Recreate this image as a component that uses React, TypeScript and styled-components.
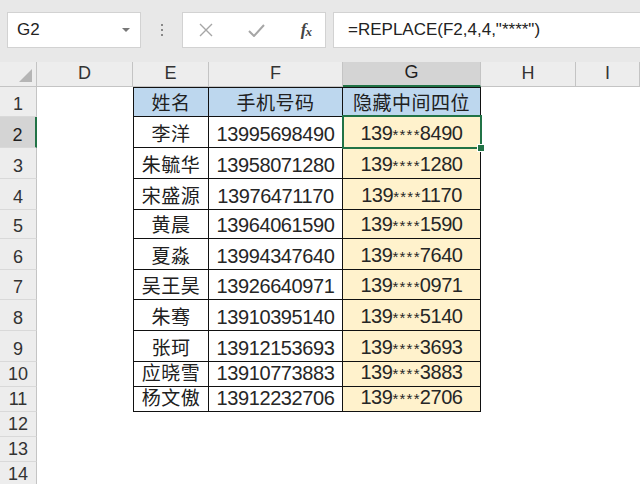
import React from 'react';
import styled, { createGlobalStyle } from 'styled-components';

const GlobalStyle = createGlobalStyle`
  html, body {
    margin: 0;
    padding: 0;
    background: #ffffff;
    overflow: hidden;
  }
  body {
    font-family: "Liberation Sans", "Noto Sans CJK SC", sans-serif;
    color: #222;
  }
`;

const Page = styled.div`
  width: 640px;
  height: 484px;
  overflow: hidden;
  display: flex;
  flex-direction: column;
`;

const TopBar = styled.div`
  height: 62px;
  flex: none;
  box-sizing: border-box;
  padding: 12px 0 0 7px;
  display: flex;
  align-items: flex-start;
  background: #e8e8e8;
`;

const WhiteBox = styled.div`
  height: 36px;
  box-sizing: border-box;
  background: #ffffff;
  border: 1px solid #d2d2d2;
  display: flex;
  align-items: center;
`;

const NameBox = styled(WhiteBox)`
  width: 134px;
  padding: 0 10px 0 9px;
  justify-content: space-between;
  font-size: 17px;
  color: #222;
`;

const DropArrow = styled.span`
  width: 0;
  height: 0;
  border-left: 4px solid transparent;
  border-right: 4px solid transparent;
  border-top: 4px solid #777;
`;

const Dots = styled.div`
  width: 41px;
  height: 36px;
  display: flex;
  flex-direction: column;
  align-items: center;
  justify-content: center;
  gap: 3px;
  span {
    width: 2px;
    height: 2px;
    background: #888;
  }
`;

const FxBox = styled(WhiteBox)`
  width: 144px;
  padding: 0 14px 0 16px;
  justify-content: space-between;
`;

const FxText = styled.span`
  font-family: "Liberation Serif", serif;
  font-style: italic;
  font-weight: bold;
  font-size: 17px;
  color: #444;
  letter-spacing: -1px;
  sub {
    font-size: 13px;
    vertical-align: -1px;
  }
`;

const FormulaBox = styled(WhiteBox)`
  flex: 1;
  margin-left: 7px;
  border-right: none;
  padding-left: 14px;
  font-size: 17px;
  color: #222;
`;

const rowHeights = [30, 31, 31, 31, 29, 31, 30, 31, 31, 25, 25, 25, 25, 25];

const Sheet = styled.div`
  display: grid;
  grid-template-columns: 37px 96px 76px 134px 138px 95px 1fr;
  grid-template-rows: 25px ${rowHeights.map((h) => `${h}px`).join(' ')};
`;

const Corner = styled.div`
  position: relative;
  background: #ededed;
  border-right: 1px solid #c4c4c4;
  border-bottom: 1px solid #c4c4c4;
  &::after {
    content: '';
    position: absolute;
    right: 4px;
    bottom: 4px;
    width: 0;
    height: 0;
    border-left: 13px solid transparent;
    border-bottom: 13px solid #b5b5b5;
  }
`;

const ColHeader = styled.div<{ $selected?: boolean }>`
  box-sizing: border-box;
  display: flex;
  align-items: flex-end;
  justify-content: center;
  padding-bottom: 2px;
  font-size: 18px;
  color: ${(p) => (p.$selected ? '#1f1f1f' : '#333')};
  background: ${(p) => (p.$selected ? '#d4d4d4' : '#ededed')};
  border-right: 1px solid #c4c4c4;
  border-bottom: ${(p) => (p.$selected ? '2px solid #217346' : '1px solid #c4c4c4')};
`;

const RowHeader = styled.div<{ $selected?: boolean }>`
  box-sizing: border-box;
  display: flex;
  align-items: flex-end;
  justify-content: center;
  padding-bottom: 2px;
  font-size: 18px;
  line-height: 20px;
  color: ${(p) => (p.$selected ? '#1f1f1f' : '#333')};
  background: ${(p) => (p.$selected ? '#d4d4d4' : '#ededed')};
  border-right: ${(p) => (p.$selected ? '2px solid #217346' : '1px solid #c4c4c4')};
  border-bottom: 1px solid #d9d9d9;
`;

const Cell = styled.div<{ $bg?: string; $table?: boolean; $top?: boolean; $left?: boolean }>`
  position: relative;
  box-sizing: border-box;
  display: flex;
  align-items: flex-end;
  justify-content: center;
  padding-bottom: 1px;
  font-size: 20px;
  line-height: 23px;
  letter-spacing: -0.4px;
  white-space: nowrap;
  color: #262626;
  background: ${(p) => p.$bg || '#ffffff'};
  border-right: ${(p) => (p.$table ? '1px solid #111' : 'none')};
  border-bottom: ${(p) => (p.$table ? '1px solid #111' : 'none')};
  border-left: ${(p) => (p.$left ? '1px solid #111' : 'none')};
  border-top: ${(p) => (p.$top ? '1px solid #111' : 'none')};
`;

const CjkText = styled.span`
  font-size: 19px;
  letter-spacing: 0.5px;
  color: #202020;
`;

const Stars = styled.span`
  font-size: 15px;
  letter-spacing: 1.2px;
  margin-right: -1px;
`;

const Selection = styled.div`
  position: absolute;
  z-index: 2;
  left: -1px;
  top: -2px;
  right: -2px;
  bottom: -2px;
  border: 2px solid #217346;
  pointer-events: none;
  &::after {
    content: '';
    position: absolute;
    right: -5px;
    bottom: -5px;
    width: 6px;
    height: 6px;
    background: #217346;
    border: 1px solid #ffffff;
  }
`;

const people: [string, string][] = [
  ['李洋', '13995698490'],
  ['朱毓华', '13958071280'],
  ['宋盛源', '13976471170'],
  ['黄晨', '13964061590'],
  ['夏淼', '13994347640'],
  ['吴王昊', '13926640971'],
  ['朱骞', '13910395140'],
  ['张珂', '13912153693'],
  ['应晓雪', '13910773883'],
  ['杨文傲', '13912232706'],
];

const columns = ['D', 'E', 'F', 'G', 'H', 'I'];

const Masked = ({ phone }: { phone: string }) => (
  <span>
    {phone.slice(0, 3)}
    <Stars>****</Stars>
    {phone.slice(7)}
  </span>
);

const XIcon = () => (
  <svg width="14" height="14" viewBox="0 0 14 14">
    <path d="M1 1L13 13M13 1L1 13" stroke="#a6a6a6" strokeWidth="1.4" fill="none" />
  </svg>
);

const CheckIcon = () => (
  <svg width="17" height="13" viewBox="0 0 17 13">
    <path d="M1 7L6 12L16 1" stroke="#a6a6a6" strokeWidth="2" fill="none" />
  </svg>
);

const App: React.FC = () => {
  const rows: React.ReactNode[] = [];

  for (let r = 1; r <= 14; r += 1) {
    const selected = r === 2;
    rows.push(
      <RowHeader key={`rh${r}`} $selected={selected}>
        {r}
      </RowHeader>,
    );
    if (r === 1) {
      rows.push(<Cell key="d1" />);
      rows.push(
        <Cell key="e1" $table $top $left $bg="#bdd7ee">
          <CjkText>姓名</CjkText>
        </Cell>,
      );
      rows.push(
        <Cell key="f1" $table $top $bg="#bdd7ee">
          <CjkText>手机号码</CjkText>
        </Cell>,
      );
      rows.push(
        <Cell key="g1" $table $top $bg="#bdd7ee">
          <CjkText>隐藏中间四位</CjkText>
        </Cell>,
      );
      rows.push(<Cell key="h1" />);
      rows.push(<Cell key="i1" />);
    } else if (r <= 11) {
      const [name, phone] = people[r - 2];
      rows.push(<Cell key={`d${r}`} />);
      rows.push(
        <Cell key={`e${r}`} $table $left>
          <CjkText>{name}</CjkText>
        </Cell>,
      );
      rows.push(
        <Cell key={`f${r}`} $table>
          {phone}
        </Cell>,
      );
      rows.push(
        <Cell key={`g${r}`} $table $bg="#fff2cc">
          <Masked phone={phone} />
          {selected && <Selection />}
        </Cell>,
      );
      rows.push(<Cell key={`h${r}`} />);
      rows.push(<Cell key={`i${r}`} />);
    } else {
      columns.forEach((c) => rows.push(<Cell key={`${c}${r}`} />));
    }
  }

  return (
    <Page>
      <GlobalStyle />
      <TopBar>
        <NameBox>
          G2
          <DropArrow />
        </NameBox>
        <Dots>
          <span />
          <span />
          <span />
        </Dots>
        <FxBox>
          <XIcon />
          <CheckIcon />
          <FxText>
            f<sub>x</sub>
          </FxText>
        </FxBox>
        <FormulaBox>=REPLACE(F2,4,4,&quot;****&quot;)</FormulaBox>
      </TopBar>
      <Sheet>
        <Corner />
        {columns.map((c) => (
          <ColHeader key={c} $selected={c === 'G'}>
            {c}
          </ColHeader>
        ))}
        {rows}
      </Sheet>
    </Page>
  );
};

export default App;
